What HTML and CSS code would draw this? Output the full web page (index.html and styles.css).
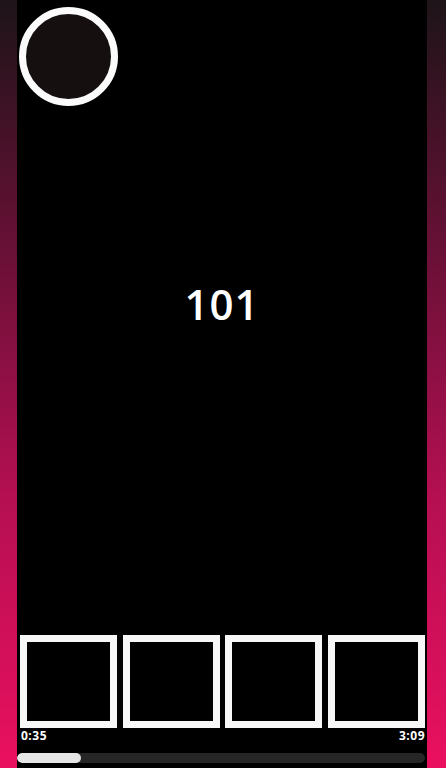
FILE: index.html
```html
<!DOCTYPE html>
<html>
<head>
<meta charset="utf-8">
<link rel="stylesheet" href="styles.css">
</head>
<body>
<div class="frame">
  <div class="stage">
    <div class="avatar"></div>
    <div class="count">101</div>
    <div class="spacer"></div>
    <div class="thumbs">
      <div class="thumb"></div>
      <div class="thumb"></div>
      <div class="thumb"></div>
      <div class="thumb"></div>
    </div>
    <div class="times">
      <span>0:35</span>
      <span>3:09</span>
    </div>
    <div class="bar">
      <div class="bar-fill"></div>
    </div>
  </div>
</div>
</body>
</html>
```
FILE: styles.css
```css
html, body {
  margin: 0;
  padding: 0;
  height: 100%;
}
body {
  font-family: "Open Sans", "Liberation Sans", sans-serif;
  background: #000;
}
.frame {
  height: 768px;
  display: flex;
  padding: 0 19px 0 17px;
  background: linear-gradient(to bottom, #1d1418 0%, #6e1038 35%, #b50f52 65%, #ea105f 100%);
  box-sizing: border-box;
}
.stage {
  flex: 1;
  background: #000;
  display: flex;
  flex-direction: column;
}
.avatar {
  width: 99px;
  height: 99px;
  box-sizing: border-box;
  border: 7px solid #fbfbfb;
  border-radius: 50%;
  background: #150f0f;
  margin: 7px 0 0 2px;
}
.count {
  margin-top: 177px;
  font-size: 42px;
  line-height: 42px;
  font-weight: 600;
  color: #fff;
  text-align: center;
  letter-spacing: 1px;
}
.spacer {
  flex: 1;
}
.thumbs {
  display: flex;
  justify-content: space-between;
  padding: 0 2px 0 3px;
}
.thumb {
  width: 97px;
  height: 93px;
  box-sizing: border-box;
  border: 7px solid #f7f7f7;
  background: #000;
}
.times {
  display: flex;
  justify-content: space-between;
  padding: 0 2px 0 4px;
  font-size: 12px;
  line-height: 15px;
  font-weight: 700;
  letter-spacing: 0.5px;
  color: #fff;
  height: 15px;
}
.bar {
  margin: 10px 2px 5px 0;
  height: 10px;
  border-radius: 5px;
  background: #262626;
  overflow: hidden;
}
.bar-fill {
  width: 64px;
  height: 100%;
  border-radius: 5px;
  background: #e6e6e6;
}
```
